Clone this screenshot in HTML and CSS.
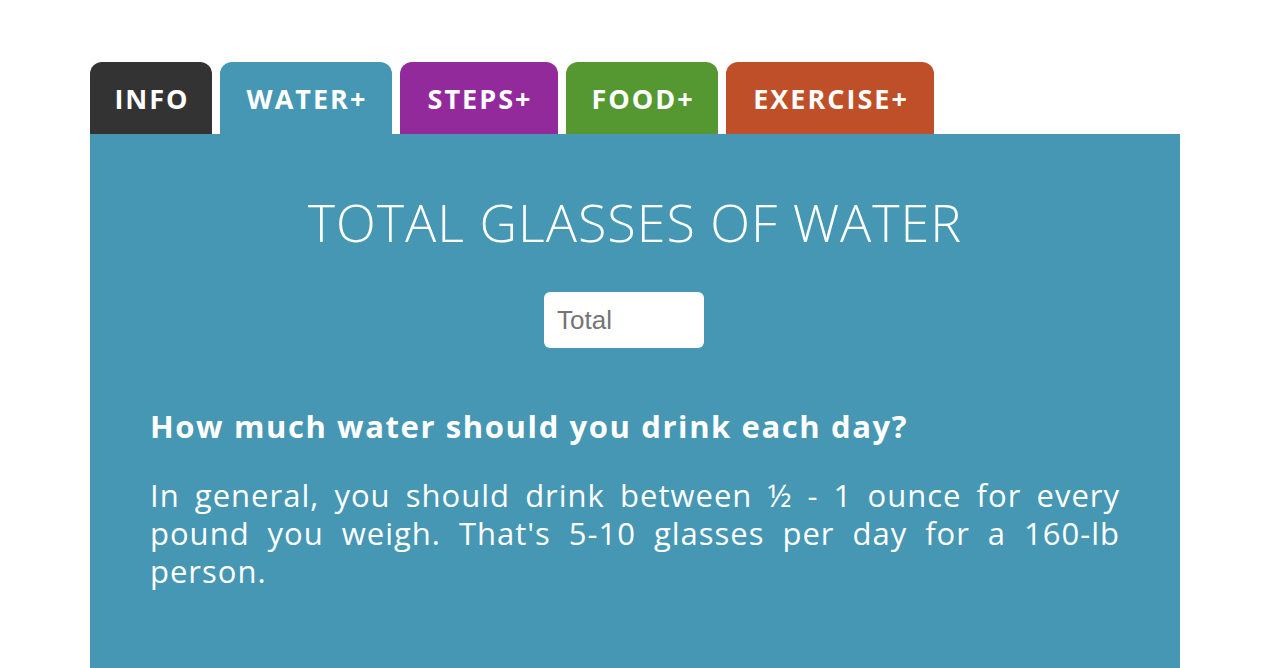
FILE: index.html
```html
<!DOCTYPE html>
<html>
<head>
<meta charset="utf-8">
<link rel="stylesheet" href="styles.css">
</head>
<body>
<div class="wrap">
  <nav class="tabs">
    <div class="tab tab-info">INFO</div>
    <div class="tab tab-water">WATER+</div>
    <div class="tab tab-steps">STEPS+</div>
    <div class="tab tab-food">FOOD+</div>
    <div class="tab tab-exercise">EXERCISE+</div>
  </nav>
  <section class="panel">
    <h1 class="title">TOTAL GLASSES OF WATER</h1>
    <div class="field-row">
      <input class="total" type="text" placeholder="Total">
    </div>
    <h2 class="question">How much water should you drink each day?</h2>
    <p class="answer">In general, you should drink between ½ - 1 ounce for every pound you weigh. That's 5-10 glasses per day for a 160-lb person.</p>
  </section>
</div>
</body>
</html>
```

FILE: styles.css
```css
html, body {
  margin: 0;
  padding: 0;
  background: #ffffff;
  height: 100%;
  overflow: hidden;
}
body {
  font-family: "Open Sans", "DejaVu Sans", sans-serif;
  color: #ffffff;
}
.wrap {
  padding: 62px 92px 0 90px;
}
.tabs {
  display: flex;
  gap: 8px;
  height: 72px;
}
.tab {
  height: 72px;
  display: flex;
  align-items: center;
  justify-content: center;
  border-radius: 12px 12px 0 0;
  font-weight: 700;
  font-size: 27px;
  letter-spacing: 2px;
  padding-left: 2px;
  color: #ffffff;
  box-sizing: border-box;
}
.tab-info { width: 122px; background: #333333; }
.tab-water { width: 172px; background: #4697b3; }
.tab-steps { width: 158px; background: #932a9c; }
.tab-food { width: 152px; background: #559832; }
.tab-exercise { width: 208px; background: #bf4f29; }
.panel {
  background: #4697b3;
  height: 534px;
  padding: 0 60px;
  box-sizing: border-box;
}
.title {
  margin: 0;
  padding-top: 58px;
  text-align: center;
  font-weight: 300;
  font-size: 52px;
  line-height: 60px;
  letter-spacing: 1px;
}
.field-row {
  display: flex;
  justify-content: center;
  padding-right: 22px;
  margin-top: 40px;
}
.total {
  width: 160px;
  height: 56px;
  box-sizing: border-box;
  border: none;
  border-radius: 6px;
  padding: 0 13px;
  font-family: "Liberation Sans", Arial, sans-serif;
  font-size: 26px;
  color: #333;
  background: #fff;
  outline: none;
}
.total::placeholder { color: #757575; }
.question {
  margin: 58px 0 0;
  font-weight: 700;
  font-size: 31px;
  line-height: 40px;
  letter-spacing: 1.6px;
}
.answer {
  margin: 30px 0 0;
  font-weight: 400;
  font-size: 31px;
  line-height: 38px;
  letter-spacing: 1px;
  text-align: justify;
}
```
